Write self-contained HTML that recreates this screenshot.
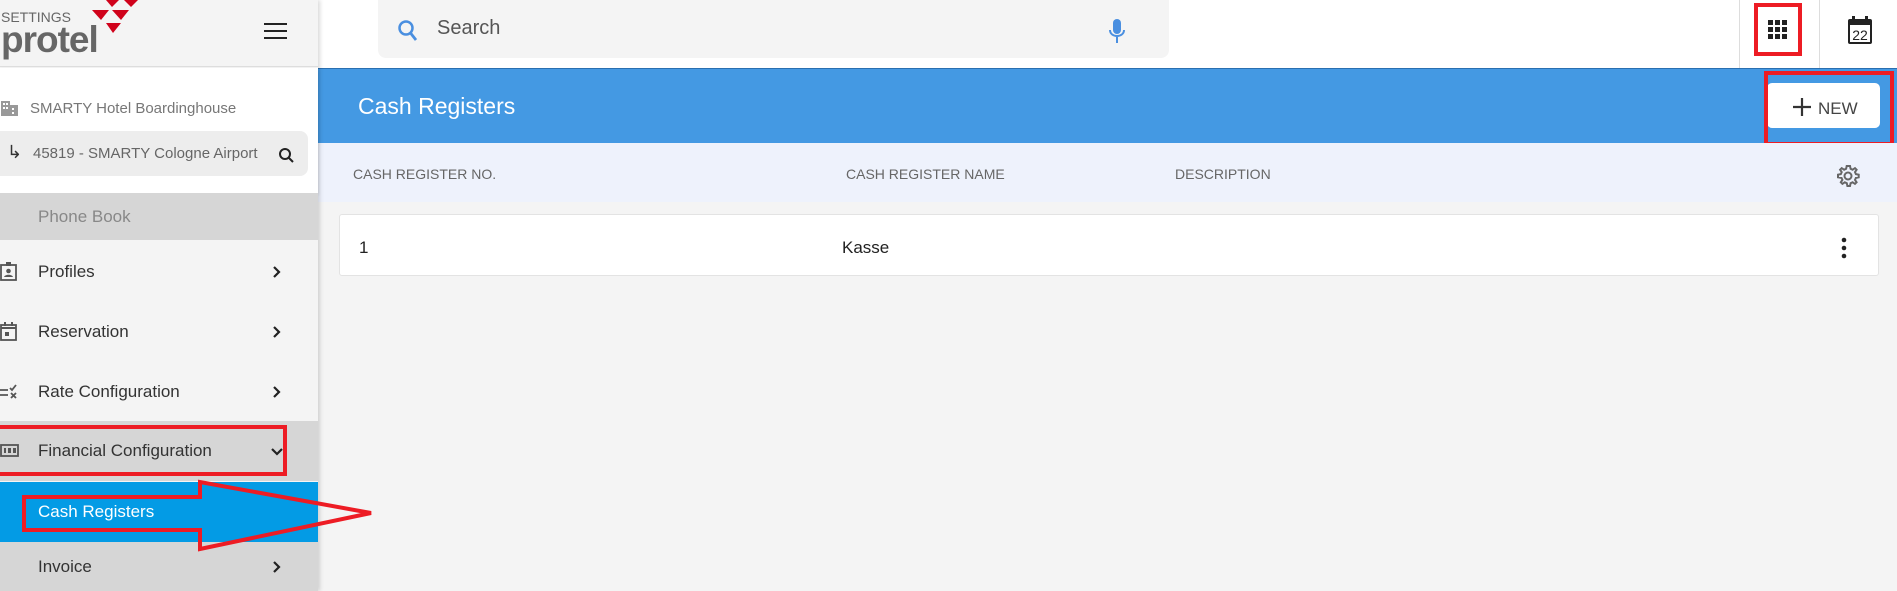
<!DOCTYPE html>
<html><head><meta charset="utf-8"><style>
*{margin:0;padding:0;box-sizing:border-box}
body{width:1897px;height:591px;overflow:hidden;background:#f4f4f4;font-family:"Liberation Sans",sans-serif;position:relative}
.a{position:absolute}
.side{left:0;top:0;width:318px;height:591px;background:#f4f4f4;box-shadow:2px 0 4px rgba(0,0,0,.15);z-index:2}
.item{position:absolute;left:0;width:318px;height:60px;font-size:17px;color:#333}
.item span{position:absolute;left:38px;top:50%;transform:translateY(-50%)}
.chev{position:absolute;left:272px;top:50%;margin-top:-6px}
.ic{position:absolute;left:0;top:50%;transform:translateY(-50%)}
</style></head><body>
<div class="a side">
  <div class="a" style="left:0;top:0;width:318px;height:67px;background:#f4f4f4;border-bottom:1px solid #ddd"></div>
  <div class="a" style="left:1px;top:9px;font-size:14px;color:#666">SETTINGS</div>
  <div class="a" style="left:1px;top:19px;font-size:37px;font-weight:bold;color:#666;letter-spacing:-1px">protel</div>
  <svg class="a" style="left:0;top:0" width="140" height="36"><g fill="#d0021b"><polygon points="106,0 119,0 112,7"/><polygon points="124,0 138,0 131,7"/><polygon points="92,10 109,10 101,20"/><polygon points="112,10 129,10 121,20"/><polygon points="106,23 121,23 113,33"/></g></svg>
  <svg class="a" style="left:264px;top:21px" width="24" height="20"><g fill="#222"><rect x="0" y="2" width="23" height="2"/><rect x="0" y="9" width="23" height="2"/><rect x="0" y="16" width="23" height="2"/></g></svg>
  <div class="a" style="left:0;top:68px;width:318px;height:125px;background:#fff;box-shadow:0 2px 3px rgba(0,0,0,.12)"></div>
  <svg class="a" style="left:1px;top:100px" width="18" height="17"><path d="M0 16V1h9v4h8v11z" fill="#999"/><g fill="#fff"><rect x="2" y="3" width="2" height="2"/><rect x="5" y="3" width="2" height="2"/><rect x="2" y="7" width="2" height="2"/><rect x="5" y="7" width="2" height="2"/><rect x="11" y="8" width="2" height="2"/><rect x="11" y="12" width="2" height="2"/></g></svg>
  <div class="a" style="left:30px;top:100px;font-size:15px;color:#777">SMARTY Hotel Boardinghouse</div>
  <div class="a" style="left:0;top:131px;width:308px;height:45px;background:#ededed;border-radius:0 8px 8px 0"></div>
  <div class="a" style="left:7px;top:142px;font-size:18px;color:#333">↳</div>
  <div class="a" style="left:33px;top:145px;font-size:15px;color:#666">45819 - SMARTY Cologne Airport</div>
  <svg class="a" style="left:278px;top:147px" width="17" height="17"><circle cx="7" cy="7" r="5" stroke="#222" stroke-width="2" fill="none"/><line x1="11" y1="11" x2="15" y2="15" stroke="#222" stroke-width="2"/></svg>
  <div class="item" style="top:193px;height:47px;background:#d6d6d6;color:#888"><span>Phone Book</span></div>
  <div class="item" style="top:242px"><svg class="ic" width="18" height="20"><rect x="1" y="3" width="15" height="15" fill="none" stroke="#555" stroke-width="1.8"/><rect x="6" y="0" width="5" height="4" fill="#555"/><circle cx="8.5" cy="9" r="2.3" fill="#555"/><path d="M4 15c1-3 8-3 9 0" fill="#555"/></svg><span>Profiles</span><svg class="chev" width="10" height="12"><path d="M2 1l5 5-5 5" stroke="#222" stroke-width="2.2" fill="none"/></svg></div>
  <div class="item" style="top:302px"><svg class="ic" width="18" height="20"><rect x="1" y="3" width="15" height="15" fill="none" stroke="#555" stroke-width="1.8"/><rect x="1" y="5" width="15" height="2" fill="#555"/><rect x="4" y="0" width="2" height="4" fill="#555"/><rect x="11" y="0" width="2" height="4" fill="#555"/><rect x="5" y="10" width="4" height="4" fill="#555"/></svg><span>Reservation</span><svg class="chev" width="10" height="12"><path d="M2 1l5 5-5 5" stroke="#222" stroke-width="2.2" fill="none"/></svg></div>
  <div class="item" style="top:362px"><svg class="ic" width="18" height="16"><g stroke="#555" stroke-width="1.8" fill="none"><path d="M0 6h8M0 11h8M10 4l2 2 4-5M11 9l5 5M16 9l-5 5"/></g></svg><span>Rate Configuration</span><svg class="chev" width="10" height="12"><path d="M2 1l5 5-5 5" stroke="#222" stroke-width="2.2" fill="none"/></svg></div>
  <div class="item" style="top:421px;background:#d6d6d6"><svg class="ic" width="19" height="14"><rect x="1" y="1" width="17" height="11" fill="none" stroke="#555" stroke-width="1.8"/><g fill="#555"><rect x="4" y="4" width="2" height="5"/><rect x="8" y="4" width="3" height="5"/><rect x="13" y="4" width="3" height="5"/></g></svg><span>Financial Configuration</span><svg class="chev" width="12" height="10" style="left:271px;margin-top:-4px"><path d="M1 2l5 5 5-5" stroke="#222" stroke-width="2.2" fill="none"/></svg></div>
  <div class="item" style="top:482px;background:#039be5;color:#fff"><span>Cash Registers</span></div>
  <div class="item" style="top:542px;height:49px;background:#d6d6d6"><span>Invoice</span><svg class="chev" width="10" height="12"><path d="M2 1l5 5-5 5" stroke="#222" stroke-width="2.2" fill="none"/></svg></div>
</div>
<div class="a" style="left:318px;top:0;width:1579px;height:68px;background:#fff"></div>
<div class="a" style="left:378px;top:0;width:791px;height:58px;background:#f4f4f4;border-radius:0 0 8px 8px"></div>
<svg class="a" style="left:397px;top:19px" width="22" height="24"><circle cx="9" cy="9" r="6.5" stroke="#4a8fe0" stroke-width="2.5" fill="none"/><line x1="13.5" y1="14" x2="19" y2="21" stroke="#4a8fe0" stroke-width="2.8"/></svg>
<div class="a" style="left:437px;top:17px;font-size:20px;color:#555">Search</div>
<svg class="a" style="left:1108px;top:19px" width="18" height="26"><rect x="5" y="0" width="8" height="15" rx="4" fill="#4a8fe0"/><path d="M2 11c0 8 14 8 14 0" stroke="#4a8fe0" stroke-width="2" fill="none"/><rect x="8" y="18" width="2" height="6" fill="#4a8fe0"/></svg>
<div class="a" style="left:1739px;top:0;width:1px;height:68px;background:#ddd"></div>
<div class="a" style="left:1819px;top:0;width:1px;height:68px;background:#ddd"></div>
<svg class="a" style="left:1768px;top:20px" width="20" height="20"><g fill="#222"><rect x="0" y="0" width="5" height="5"/><rect x="7" y="0" width="5" height="5"/><rect x="14" y="0" width="5" height="5"/><rect x="0" y="7" width="5" height="5"/><rect x="7" y="7" width="5" height="5"/><rect x="14" y="7" width="5" height="5"/><rect x="0" y="14" width="5" height="5"/><rect x="7" y="14" width="5" height="5"/><rect x="14" y="14" width="5" height="5"/></g></svg>
<div class="a" style="left:1754px;top:3px;width:48px;height:53px;border:4px solid #ed1c24"></div>
<svg class="a" style="left:1847px;top:16px" width="26" height="29"><rect x="1" y="3" width="24" height="25" rx="2" fill="#222"/><rect x="3" y="9" width="20" height="17" fill="#fff"/><rect x="5" y="0" width="3" height="5" fill="#222"/><rect x="18" y="0" width="3" height="5" fill="#222"/><text x="13" y="24" font-size="14" text-anchor="middle" font-family="Liberation Sans" fill="#222">22</text></svg>
<div class="a" style="left:318px;top:68px;width:1579px;height:75px;background:#4499e3;border-top:1px solid #2a6fb0"></div>
<div class="a" style="left:358px;top:93px;font-size:23px;color:#fff">Cash Registers</div>
<div class="a" style="left:1767px;top:83px;width:113px;height:45px;background:#fff;border-radius:5px"></div>
<svg class="a" style="left:1793px;top:98px" width="18" height="18"><path d="M9 0v18M0 9h18" stroke="#333" stroke-width="2.2"/></svg>
<div class="a" style="left:1818px;top:99px;font-size:17px;color:#444">NEW</div>
<div class="a" style="left:1764px;top:71px;width:130px;height:75px;border:4px solid #ed1c24"></div>
<div class="a" style="left:318px;top:143px;width:1579px;height:59px;background:#eef2fc"></div>
<div class="a" style="left:353px;top:166px;font-size:14px;color:#666">CASH REGISTER NO.</div>
<div class="a" style="left:846px;top:166px;font-size:14px;color:#666">CASH REGISTER NAME</div>
<div class="a" style="left:1175px;top:166px;font-size:14px;color:#666">DESCRIPTION</div>
<svg class="a" style="left:1836px;top:164px" width="24" height="24" viewBox="0 0 24 24"><path d="M12 2l2 0 .6 2.8 2 .9 2.4-1.6 1.6 1.6-1.6 2.4.9 2 2.8.6v2.6l-2.8.6-.9 2 1.6 2.4-1.6 1.6-2.4-1.6-2 .9-.6 2.8h-2.6l-.6-2.8-2-.9-2.4 1.6-1.6-1.6 1.6-2.4-.9-2L2 13.3v-2.6l2.8-.6.9-2-1.6-2.4 1.6-1.6 2.4 1.6 2-.9L10.7 2z" fill="none" stroke="#666" stroke-width="2"/><circle cx="12" cy="12" r="3.5" fill="none" stroke="#666" stroke-width="2"/></svg>
<div class="a" style="left:339px;top:214px;width:1540px;height:62px;background:#fff;border:1px solid #e3e3e3;border-radius:3px"></div>
<div class="a" style="left:359px;top:238px;font-size:17px;color:#222">1</div>
<div class="a" style="left:842px;top:238px;font-size:17px;color:#222">Kasse</div>
<svg class="a" style="left:1840px;top:237px" width="8" height="22"><circle cx="4" cy="3" r="2.3" fill="#222"/><circle cx="4" cy="11" r="2.3" fill="#222"/><circle cx="4" cy="19" r="2.3" fill="#222"/></svg>
<svg class="a" style="left:0;top:0;z-index:3" width="1897" height="591"><g fill="none" stroke="#ed1c24" stroke-width="4"><rect x="-3" y="427" width="288" height="47"/><polygon points="24,497 200,497 200,482 371,513 200,549 200,530 24,530"/></g></svg>
</body></html>
